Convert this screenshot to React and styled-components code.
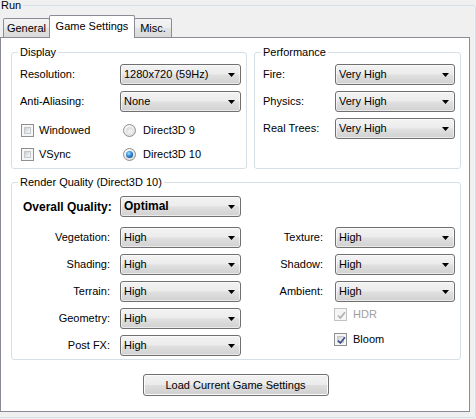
import React from 'react';
import styled, { createGlobalStyle } from 'styled-components';

const Global = createGlobalStyle`
  html, body { margin: 0; padding: 0; background: #f0f0f0; overflow: hidden; }
  body { font-family: "Liberation Sans", Arial, sans-serif; font-size: 11px; color: #000; }
  #root { width: 476px; height: 419px; overflow: hidden; }
  * { box-sizing: border-box; }
`;

const Frame = styled.div`
  width: 476px;
  height: 419px;
  overflow: hidden;
`;

const RunGroup = styled.div`
  position: relative;
  margin: 5px 0 0 -8px;
  width: 484px;
  height: 413px;
  border: 1px solid #d5dfe5;
  border-radius: 3px;
  padding: 9px 0 0 7px;
`;

const Legend = styled.span`
  position: absolute;
  top: -7px;
  left: 6px;
  padding: 0 2px;
  line-height: 13px;
  white-space: nowrap;
  background: ${(p) => p.$bg || '#fff'};
`;

const TabStrip = styled.div`
  position: relative;
  z-index: 1;
  display: flex;
  align-items: flex-end;
  height: 23px;
  padding-left: 3px;
  margin-bottom: -1px;
`;

const Tab = styled.div`
  display: flex;
  align-items: center;
  justify-content: center;
  width: ${(p) => p.$w}px;
  height: ${(p) => (p.$active ? 23 : 19)}px;
  margin-left: ${(p) => (p.$first ? 0 : -1)}px;
  margin-bottom: ${(p) => (p.$active ? 0 : 1)}px;
  padding-bottom: ${(p) => (p.$active ? 2 : 0)}px;
  border: 1px solid #898c95;
  border-bottom: none;
  border-radius: 2px 2px 0 0;
  background: ${(p) =>
    p.$active ? '#fff' : 'linear-gradient(#f4f4f4 0%, #ececec 50%, #e2e2e2 51%, #dadada 100%)'};
  position: relative;
  z-index: ${(p) => (p.$active ? 2 : 1)};
  white-space: nowrap;
`;

const Panel = styled.div`
  width: 470px;
  height: 375px;
  border: 1px solid #898c95;
  background: #fff;
  padding: 14px 9px 0 10px;
  display: flex;
  flex-direction: column;
`;

const TopRow = styled.div`
  display: flex;
  gap: 7px;
`;

const GroupBox = styled.div`
  position: relative;
  width: ${(p) => p.$w}px;
  height: ${(p) => p.$h}px;
  border: 1px solid #d5dfe5;
  border-radius: 3px;
  padding: ${(p) => p.$pad};
  margin-top: ${(p) => p.$mt || 0}px;
  flex: none;
`;

const FormGrid = styled.div`
  display: grid;
  grid-template-columns: ${(p) => p.$label}px ${(p) => p.$field}px;
  grid-auto-rows: 21px;
  row-gap: 6px;
  align-items: center;
`;

const Label = styled.span`
  white-space: nowrap;
  line-height: 13px;
`;

const CheckGrid = styled.div`
  display: grid;
  grid-template-columns: 100px 121px;
  grid-auto-rows: 13px;
  row-gap: 11px;
  margin-top: 12px;
  align-items: center;
`;

const Option = styled.div`
  display: flex;
  align-items: center;
  gap: ${(p) => p.$gap || 5}px;
  margin-left: ${(p) => p.$ml || 0}px;
  line-height: 13px;
  white-space: nowrap;
  color: ${(p) => (p.$disabled ? '#a0a0a0' : '#000')};
`;

const Box = styled.span`
  position: relative;
  display: inline-flex;
  flex: none;
  width: 13px;
  height: 13px;
  padding: 2px;
  border: 1px solid ${(p) => (p.$disabled ? '#c2c2c2' : '#8e8f8f')};
  background: #f6f6f6;
`;

const BoxInner = styled.span`
  flex: 1;
  border: 1px solid ${(p) => (p.$disabled ? '#f4f4f4' : '#c4c8cc')};
  background: ${(p) =>
    p.$disabled ? '#f4f4f4' : 'linear-gradient(135deg, #c9cdd2 0%, #e6e7e9 55%, #f7f7f7 100%)'};
`;

const Mark = styled.svg`
  position: absolute;
  left: 1px;
  top: 1px;
`;

const RadioOuter = styled.span`
  display: inline-flex;
  flex: none;
  align-items: center;
  justify-content: center;
  width: 13px;
  height: 13px;
  border-radius: 50%;
  border: 1px solid #8e8f8f;
  background: radial-gradient(circle at 35% 30%, #ffffff 0%, #e6e6e6 60%, #d2d2d2 100%);
`;

const RadioDot = styled.span`
  width: 7px;
  height: 7px;
  border-radius: 50%;
  background: ${(p) =>
    p.$on
      ? 'radial-gradient(circle at 40% 35%, #a8e0ff 0%, #3b93de 40%, #0f4d95 80%, #0a3366 100%)'
      : 'radial-gradient(circle at 60% 65%, #f7f7f7 0%, #dadada 70%, #c8c8c8 100%)'};
`;

const ComboBox = styled.div`
  display: flex;
  align-items: center;
  width: ${(p) => p.$w}px;
  height: 21px;
  padding: 0 5px 0 3px;
  border: 1px solid #707070;
  border-radius: 3px;
  background: linear-gradient(#f3f3f3 0%, #ececec 45%, #dfdfdf 55%, #d1d1d1 100%);
  box-shadow: inset 0 0 0 1px rgba(255, 255, 255, 0.55);
  font-size: ${(p) => (p.$bold ? 12 : 11)}px;
  font-weight: ${(p) => (p.$bold ? 700 : 400)};
`;

const ComboText = styled.span`
  flex: 1;
  white-space: nowrap;
  overflow: hidden;
  line-height: 13px;
`;

const RenderGrid = styled.div`
  display: grid;
  grid-template-columns: 98px 121px 74px 120px;
  grid-auto-rows: 21px;
  column-gap: 10px;
  row-gap: 6px;
  align-items: center;
`;

const OverallRow = styled.div`
  display: flex;
  align-items: center;
  gap: 10px;
  margin-bottom: 10px;
`;

const OverallLabel = styled.span`
  width: 98px;
  padding-left: 11px;
  font-size: 12px;
  font-weight: 700;
  white-space: nowrap;
`;

const RightLabel = styled.span`
  text-align: right;
  white-space: nowrap;
  line-height: 13px;
  padding-right: ${(p) => p.$pr || 0}px;
`;

const CheckStack = styled.div`
  grid-column: 4;
  grid-row: 4 / span 2;
  align-self: start;
  display: flex;
  flex-direction: column;
  gap: 12px;
  margin-left: -1px;
`;

const ButtonRow = styled.div`
  display: flex;
  justify-content: center;
  margin-top: 14px;
`;

const Button = styled.button`
  width: 186px;
  height: 22px;
  padding: 0;
  border: 1px solid #707070;
  border-radius: 3px;
  background: linear-gradient(#f2f2f2 0%, #ebebeb 50%, #dddddd 51%, #cfcfcf 100%);
  box-shadow: inset 0 0 0 1px #fbfbfb;
  font-family: "Liberation Sans", Arial, sans-serif;
  font-size: 11px;
  color: #000;
`;

function Combo({ value, w = 121, bold }) {
  return (
    <ComboBox $w={w} $bold={bold}>
      <ComboText>{value}</ComboText>
      <svg width="7" height="4" viewBox="0 0 7 4">
        <polygon points="0,0 7,0 3.5,4" fill="#000" />
      </svg>
    </ComboBox>
  );
}

function Check({ label, checked, disabled, gap = 5, ml = 0 }) {
  return (
    <Option $gap={gap} $ml={ml} $disabled={disabled}>
      <Box $disabled={disabled}>
        <BoxInner $disabled={disabled} />
        {checked && (
          <Mark width="11" height="11" viewBox="0 0 11 11">
            <path
              d="M2 5.5 L4.3 8 L9 2.2"
              fill="none"
              stroke={disabled ? '#b0b0b0' : '#3b4f8f'}
              strokeWidth="1.7"
            />
          </Mark>
        )}
      </Box>
      <span>{label}</span>
    </Option>
  );
}

function Radio({ label, on, ml = 0 }) {
  return (
    <Option $gap={7} $ml={ml}>
      <RadioOuter>
        <RadioDot $on={on} />
      </RadioOuter>
      <span>{label}</span>
    </Option>
  );
}

const leftRows = [
  ['Vegetation:', 'High'],
  ['Shading:', 'High'],
  ['Terrain:', 'High'],
  ['Geometry:', 'High'],
  ['Post FX:', 'High'],
];

const rightRows = [
  ['Texture:', 'High'],
  ['Shadow:', 'High'],
  ['Ambient:', 'High'],
];

export default function App() {
  return (
    <Frame>
      <Global />
      <RunGroup>
        <Legend $bg="#f0f0f0">Run</Legend>
        <TabStrip>
          <Tab $w={47} $first>General</Tab>
          <Tab $w={86} $active>Game Settings</Tab>
          <Tab $w={38}>Misc.</Tab>
        </TabStrip>
        <Panel>
          <TopRow>
            <GroupBox $w={236} $h={117} $pad="11px 0 0 8px">
              <Legend>Display</Legend>
              <FormGrid $label={100} $field={121}>
                <Label>Resolution:</Label>
                <Combo value="1280x720 (59Hz)" />
                <Label>Anti-Aliasing:</Label>
                <Combo value="None" />
              </FormGrid>
              <CheckGrid>
                <Check label="Windowed" ml={1} />
                <Radio label="Direct3D 9" ml={3} />
                <Check label="VSync" ml={1} />
                <Radio label="Direct3D 10" on ml={3} />
              </CheckGrid>
            </GroupBox>
            <GroupBox $w={207} $h={117} $pad="11px 0 0 8px">
              <Legend>Performance</Legend>
              <FormGrid $label={72} $field={120}>
                <Label>Fire:</Label>
                <Combo value="Very High" w={120} />
                <Label>Physics:</Label>
                <Combo value="Very High" w={120} />
                <Label>Real Trees:</Label>
                <Combo value="Very High" w={120} />
              </FormGrid>
            </GroupBox>
          </TopRow>
          <GroupBox $w={450} $h={178} $pad="13px 0 0 0" $mt={13}>
            <Legend>Render Quality (Direct3D 10)</Legend>
            <OverallRow>
              <OverallLabel>Overall Quality:</OverallLabel>
              <Combo value="Optimal" bold />
            </OverallRow>
            <RenderGrid>
              {leftRows.map(([l, v], i) => (
                <React.Fragment key={l}>
                  <RightLabel style={{ gridRow: i + 1, gridColumn: 1 }}>{l}</RightLabel>
                  <div style={{ gridRow: i + 1, gridColumn: 2 }}>
                    <Combo value={v} />
                  </div>
                </React.Fragment>
              ))}
              {rightRows.map(([l, v], i) => (
                <React.Fragment key={l}>
                  <RightLabel $pr={2} style={{ gridRow: i + 1, gridColumn: 3 }}>{l}</RightLabel>
                  <div style={{ gridRow: i + 1, gridColumn: 4 }}>
                    <Combo value={v} w={120} />
                  </div>
                </React.Fragment>
              ))}
              <CheckStack>
                <Check label="HDR" checked disabled gap={6} />
                <Check label="Bloom" checked gap={6} />
              </CheckStack>
            </RenderGrid>
          </GroupBox>
          <ButtonRow>
            <Button>Load Current Game Settings</Button>
          </ButtonRow>
        </Panel>
      </RunGroup>
    </Frame>
  );
}
